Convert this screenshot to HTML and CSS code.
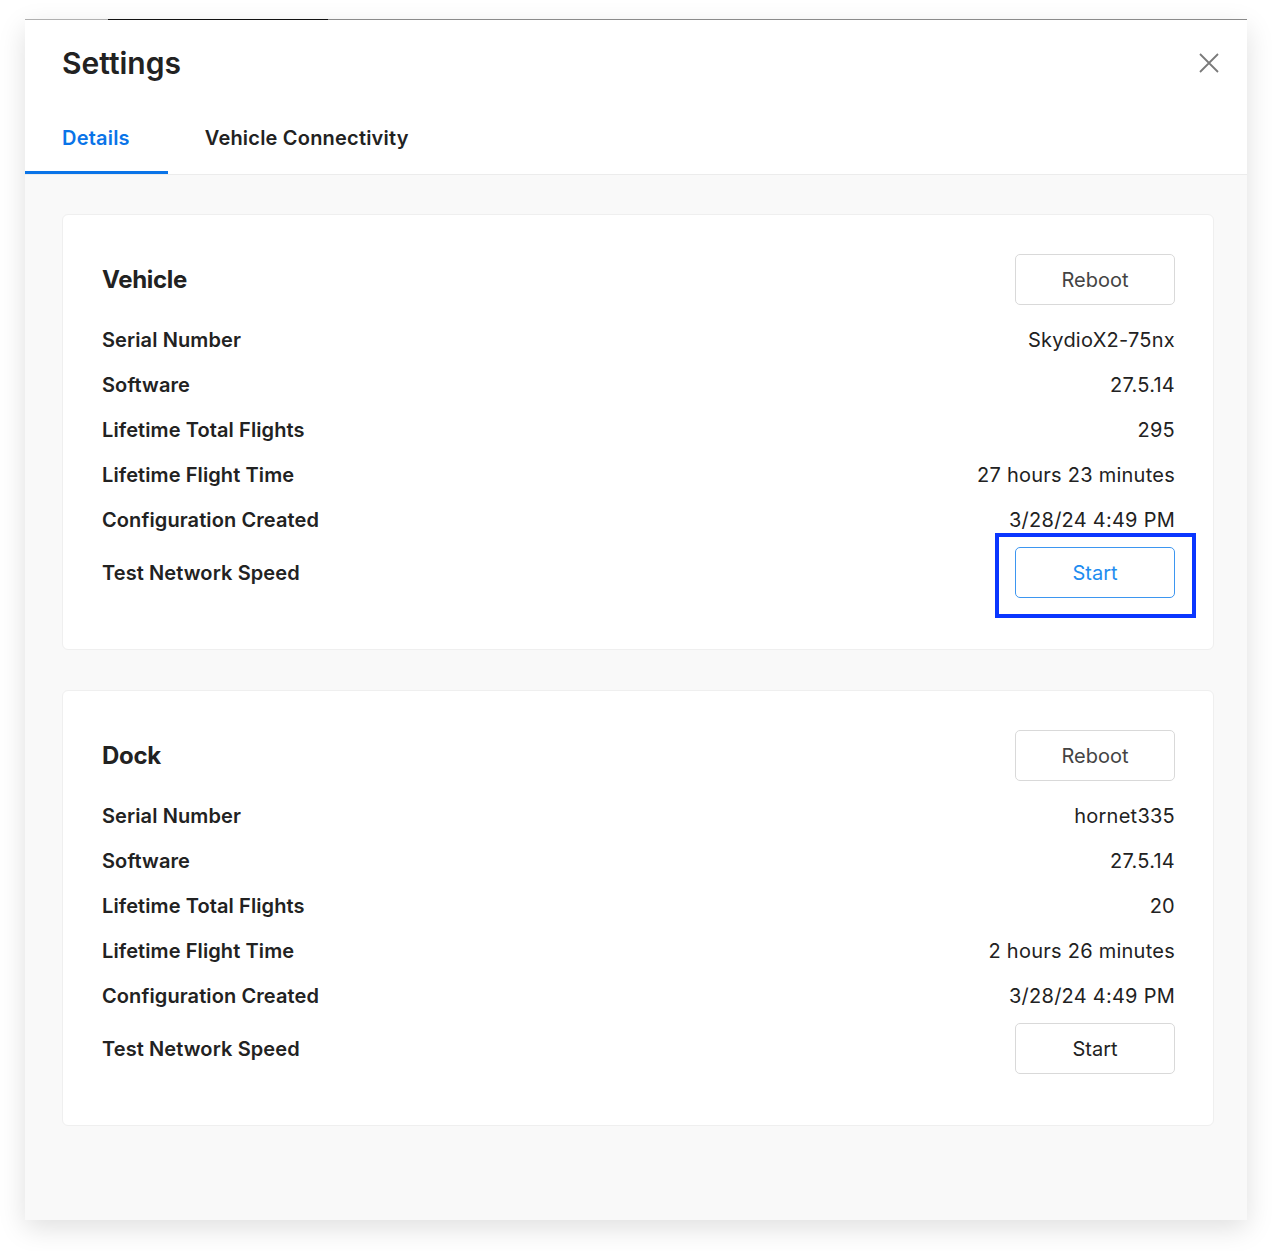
FILE: index.html
```html
<!DOCTYPE html>
<html>
<head>
<meta charset="utf-8">
<link rel="stylesheet" href="styles.css">
</head>
<body>
<div class="modal">
  <div class="topline"></div>
  <div class="header">
    <div class="title-row">
      <h1 class="title">Settings</h1>
      <button class="close" aria-label="Close">
        <svg width="20" height="20" viewBox="0 0 20 20"><path d="M1 1 L19 19 M19 1 L1 19" stroke="#7a7a7a" stroke-width="1.8" fill="none"/></svg>
      </button>
    </div>
    <div class="tabs">
      <div class="tab active">Details</div>
      <div class="tab">Vehicle Connectivity</div>
    </div>
  </div>
  <div class="body">
    <section class="card">
      <div class="card-head">
        <h2 class="card-title">Vehicle</h2>
        <button class="btn">Reboot</button>
      </div>
      <div class="rows">
        <div class="row"><span class="label">Serial Number</span><span class="value">SkydioX2-75nx</span></div>
        <div class="row"><span class="label">Software</span><span class="value">27.5.14</span></div>
        <div class="row"><span class="label">Lifetime Total Flights</span><span class="value">295</span></div>
        <div class="row"><span class="label">Lifetime Flight Time</span><span class="value">27 hours 23 minutes</span></div>
        <div class="row"><span class="label">Configuration Created</span><span class="value">3/28/24 4:49 PM</span></div>
        <div class="row row-btn"><span class="label">Test Network Speed</span>
          <span class="btn-wrap"><button class="btn btn-focus">Start</button><span class="highlight"></span></span>
        </div>
      </div>
    </section>
    <section class="card">
      <div class="card-head">
        <h2 class="card-title">Dock</h2>
        <button class="btn">Reboot</button>
      </div>
      <div class="rows">
        <div class="row"><span class="label">Serial Number</span><span class="value">hornet335</span></div>
        <div class="row"><span class="label">Software</span><span class="value">27.5.14</span></div>
        <div class="row"><span class="label">Lifetime Total Flights</span><span class="value">20</span></div>
        <div class="row"><span class="label">Lifetime Flight Time</span><span class="value">2 hours 26 minutes</span></div>
        <div class="row"><span class="label">Configuration Created</span><span class="value">3/28/24 4:49 PM</span></div>
        <div class="row row-btn"><span class="label">Test Network Speed</span>
          <span class="btn-wrap"><button class="btn btn-dark">Start</button></span>
        </div>
      </div>
    </section>
  </div>
</div>
</body>
</html>
```

FILE: styles.css
```css
* { box-sizing: border-box; }
html, body { margin: 0; padding: 0; background: #ffffff; }
body {
  font-family: Inter, "Noto Sans", "Liberation Sans", sans-serif;
  color: #222222;
  padding: 20px 25px 31px 25px;
}
.modal {
  position: relative;
  width: 1222px;
  height: 1200px;
  background: #f9f9f9;
  box-shadow: 0 8px 26px rgba(0, 0, 0, 0.13);
  display: flex;
  flex-direction: column;
}
.topline {
  position: absolute;
  left: 0; right: 0; top: -1px;
  height: 1px;
  background: linear-gradient(to right, #b0b0b0 0, #b0b0b0 83px, #111 83px, #111 303px, #8a8a8a 303px, #8a8a8a 100%);
}
.header {
  background: #ffffff;
  border-bottom: 1px solid #ececec;
}
.title-row {
  display: flex;
  justify-content: space-between;
  padding: 23px 28px 0 37px;
  height: 86px;
  align-items: flex-start;
}
.title {
  margin: 0;
  font-size: 30px;
  font-weight: 600;
  line-height: 40px;
  letter-spacing: 0;
  color: #222;
}
.close {
  border: 0;
  background: transparent;
  padding: 0;
  margin-top: 10px;
  width: 20px; height: 20px;
  display: flex;
}
.tabs {
  display: flex;
  height: 68px;
}
.tab {
  padding: 0 38px 0 37px;
  display: flex;
  align-items: center;
  font-size: 20px;
  font-weight: 600;
  color: #222;
  letter-spacing: 0.2px;
  border-bottom: 3px solid transparent;
  padding-bottom: 2px;
}
.tab.active {
  color: #0a74e8;
  border-bottom-color: #0a74e8;
}
.body {
  flex: 1;
  padding: 39px 33px 0 37px;
  display: flex;
  flex-direction: column;
  gap: 40px;
}
.card {
  background: #ffffff;
  border: 1px solid #efefef;
  border-radius: 6px;
  padding: 39px 38px 51px 39px;
}
.card-head {
  display: flex;
  justify-content: space-between;
  align-items: center;
  height: 51px;
}
.card-title {
  margin: 0;
  font-size: 24px;
  font-weight: 700;
  letter-spacing: -0.3px;
  color: #222;
}
.btn {
  width: 160px;
  height: 51px;
  background: #ffffff;
  border: 1px solid #d9d9d9;
  border-radius: 5px;
  font-family: inherit;
  font-size: 20px;
  color: #444444;
  padding: 0;
  letter-spacing: 0;
}
.btn-dark { color: #222; }
.btn-focus {
  border-color: #3d96f0;
  color: #1e8cf0;
}
.rows {
  margin-top: 12px;
  display: flex;
  flex-direction: column;
}
.row {
  display: flex;
  justify-content: space-between;
  align-items: center;
  height: 45px;
  font-size: 20px;
}
.row-btn {
  height: 51px;
  margin-top: 5px;
}
.label { font-weight: 600; color: #222; letter-spacing: 0.1px; }
.value { font-weight: 400; color: #222; letter-spacing: 0.25px; }
.btn-wrap {
  position: relative;
  display: flex;
}
.highlight {
  position: absolute;
  left: -20px; right: -21px;
  top: -14px; bottom: -20px;
  border: 4px solid #0a36ff;
  pointer-events: none;
}
```
